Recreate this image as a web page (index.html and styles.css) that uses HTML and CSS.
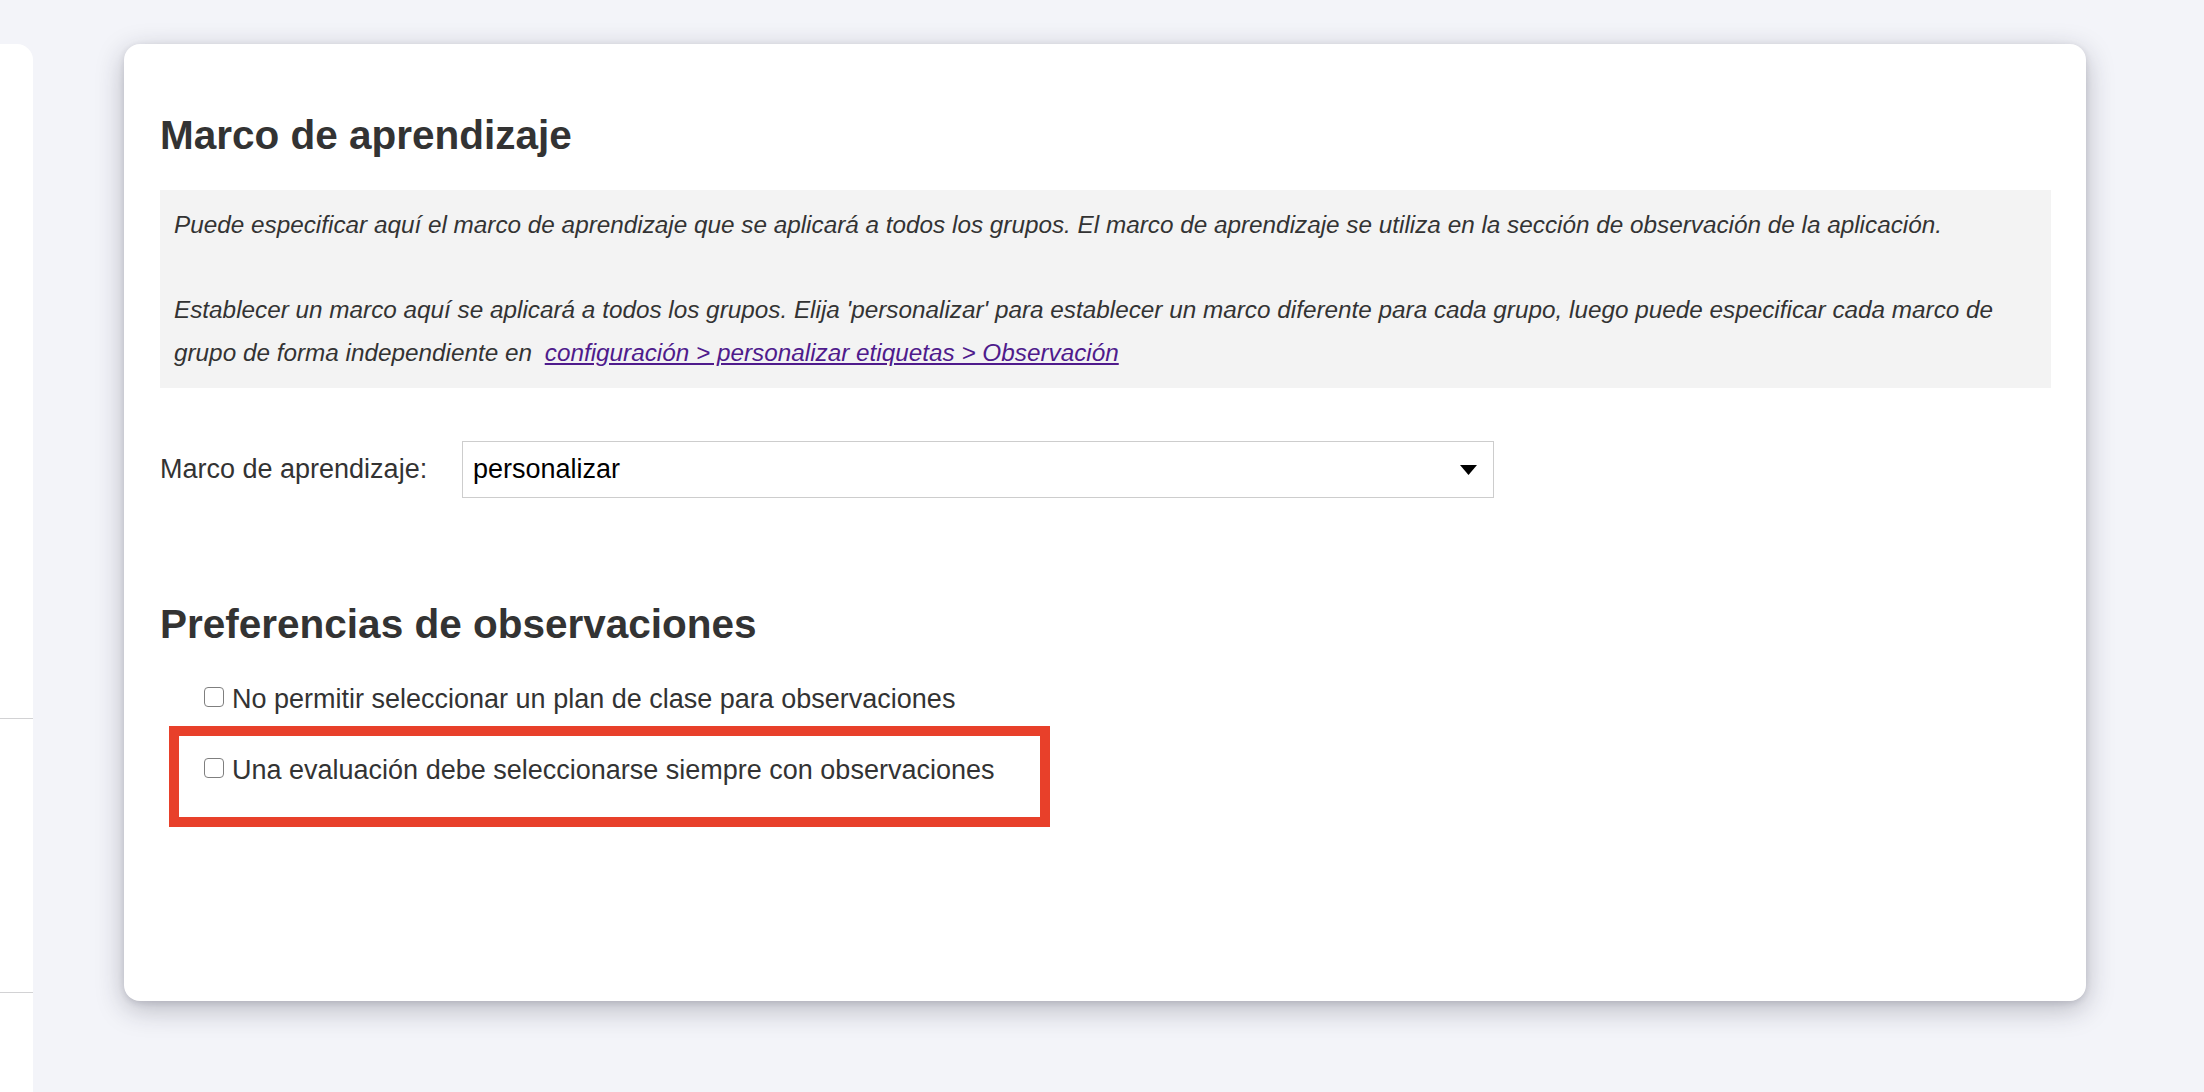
FILE: index.html
```html
<!DOCTYPE html>
<html lang="es">
<head>
  <meta charset="UTF-8" />
  <meta name="viewport" content="width=device-width, initial-scale=1.0"/>
  <title>Marco de aprendizaje</title>
  <link rel="stylesheet" href="styles.css">
</head>
<body>
  <div class="page">
    <aside class="sidebar">
      <div class="side-block first"></div>
      <div class="side-block second"></div>
    </aside>

    <main class="card">
      <h1>Marco de aprendizaje</h1>

      <div class="info">
        Puede especificar aquí el marco de aprendizaje que se aplicará a todos los grupos. El marco de aprendizaje se utiliza en la sección de observación de la aplicación.<br><br>
        Establecer un marco aquí se aplicará a todos los grupos. Elija 'personalizar' para establecer un marco diferente para cada grupo, luego puede especificar cada marco de grupo de forma independiente en <a href="#">configuración &gt; personalizar etiquetas &gt; Observación</a>
      </div>

      <div class="field-row">
        <label class="field-label">Marco de aprendizaje:</label>
        <div class="select-box">
          <span>personalizar</span>
          <svg width="17" height="10" viewBox="0 0 17 10"><polygon points="0,0 17,0 8.5,10" fill="#000"/></svg>
        </div>
      </div>

      <h2>Preferencias de observaciones</h2>

      <label class="check-row">
        <input type="checkbox" />
        <span>No permitir seleccionar un plan de clase para observaciones</span>
      </label>

      <div class="highlight">
        <label class="check-row">
          <input type="checkbox" />
          <span>Una evaluación debe seleccionarse siempre con observaciones</span>
        </label>
      </div>
    </main>
  </div>
</body>
</html>
```

FILE: styles.css
```css
* {
  box-sizing: border-box;
}

body {
  margin: 0;
  background-color: #f3f4f9;
  font-family: "Liberation Sans", Arial, Helvetica, sans-serif;
  color: #333;
  overflow: hidden;
}

.page {
  display: flex;
  align-items: flex-start;
  padding-top: 44px;
  height: 1092px;
}

.sidebar {
  width: 33px;
  height: 1048px;
  background: white;
  border-top-right-radius: 16px;
  flex-shrink: 0;
}

.side-block {
  border-bottom: 1px solid #d2d2d4;
}

.side-block.first {
  height: 675px;
}

.side-block.second {
  height: 274px;
}

.card {
  margin-left: 91px;
  width: 1962px;
  height: 957px;
  background: white;
  border-radius: 16px;
  box-shadow: 0 8px 28px rgba(30, 30, 50, 0.28), 0 2px 6px rgba(30, 30, 50, 0.12);
  padding: 68px 35px 36px 36px;
  flex-shrink: 0;
}

h1, h2 {
  font-size: 40.5px;
  line-height: 46px;
  font-weight: bold;
  color: #333;
  margin: 0;
}

h1 {
  margin-bottom: 32px;
}

.info {
  background-color: #f3f3f3;
  padding: 14px 14px;
  font-size: 24.3px;
  line-height: 42.6px;
  font-style: italic;
  color: #333;
}

.info a {
  color: #4f1b8c;
  text-decoration: underline;
  margin-left: 6px;
}

.field-row {
  display: flex;
  align-items: center;
  margin-top: 53px;
}

.field-label {
  font-size: 27px;
  width: 302px;
}

.select-box {
  width: 1032px;
  height: 57px;
  border: 1px solid #cdcdcd;
  display: flex;
  align-items: center;
  justify-content: space-between;
  padding: 0 16px 0 10px;
  font-size: 27px;
  color: #000;
}

h2 {
  margin-top: 103px;
  margin-bottom: 34px;
}

.check-row {
  display: flex;
  align-items: center;
  gap: 8px;
  height: 36px;
  padding-left: 44px;
  font-size: 27px;
  color: #333;
}

.check-row input {
  appearance: none;
  -webkit-appearance: none;
  width: 20px;
  height: 20px;
  margin: 0;
  margin-top: -4px;
  border: 1.5px solid #7f7f7f;
  border-radius: 4px;
  background: white;
}

.highlight {
  margin-top: 9px;
  margin-left: 9px;
  width: 881px;
  height: 101px;
  border: 10px solid #e8402a;
  padding-top: 16px;
}

.highlight .check-row {
  padding-left: 25px;
}
```
